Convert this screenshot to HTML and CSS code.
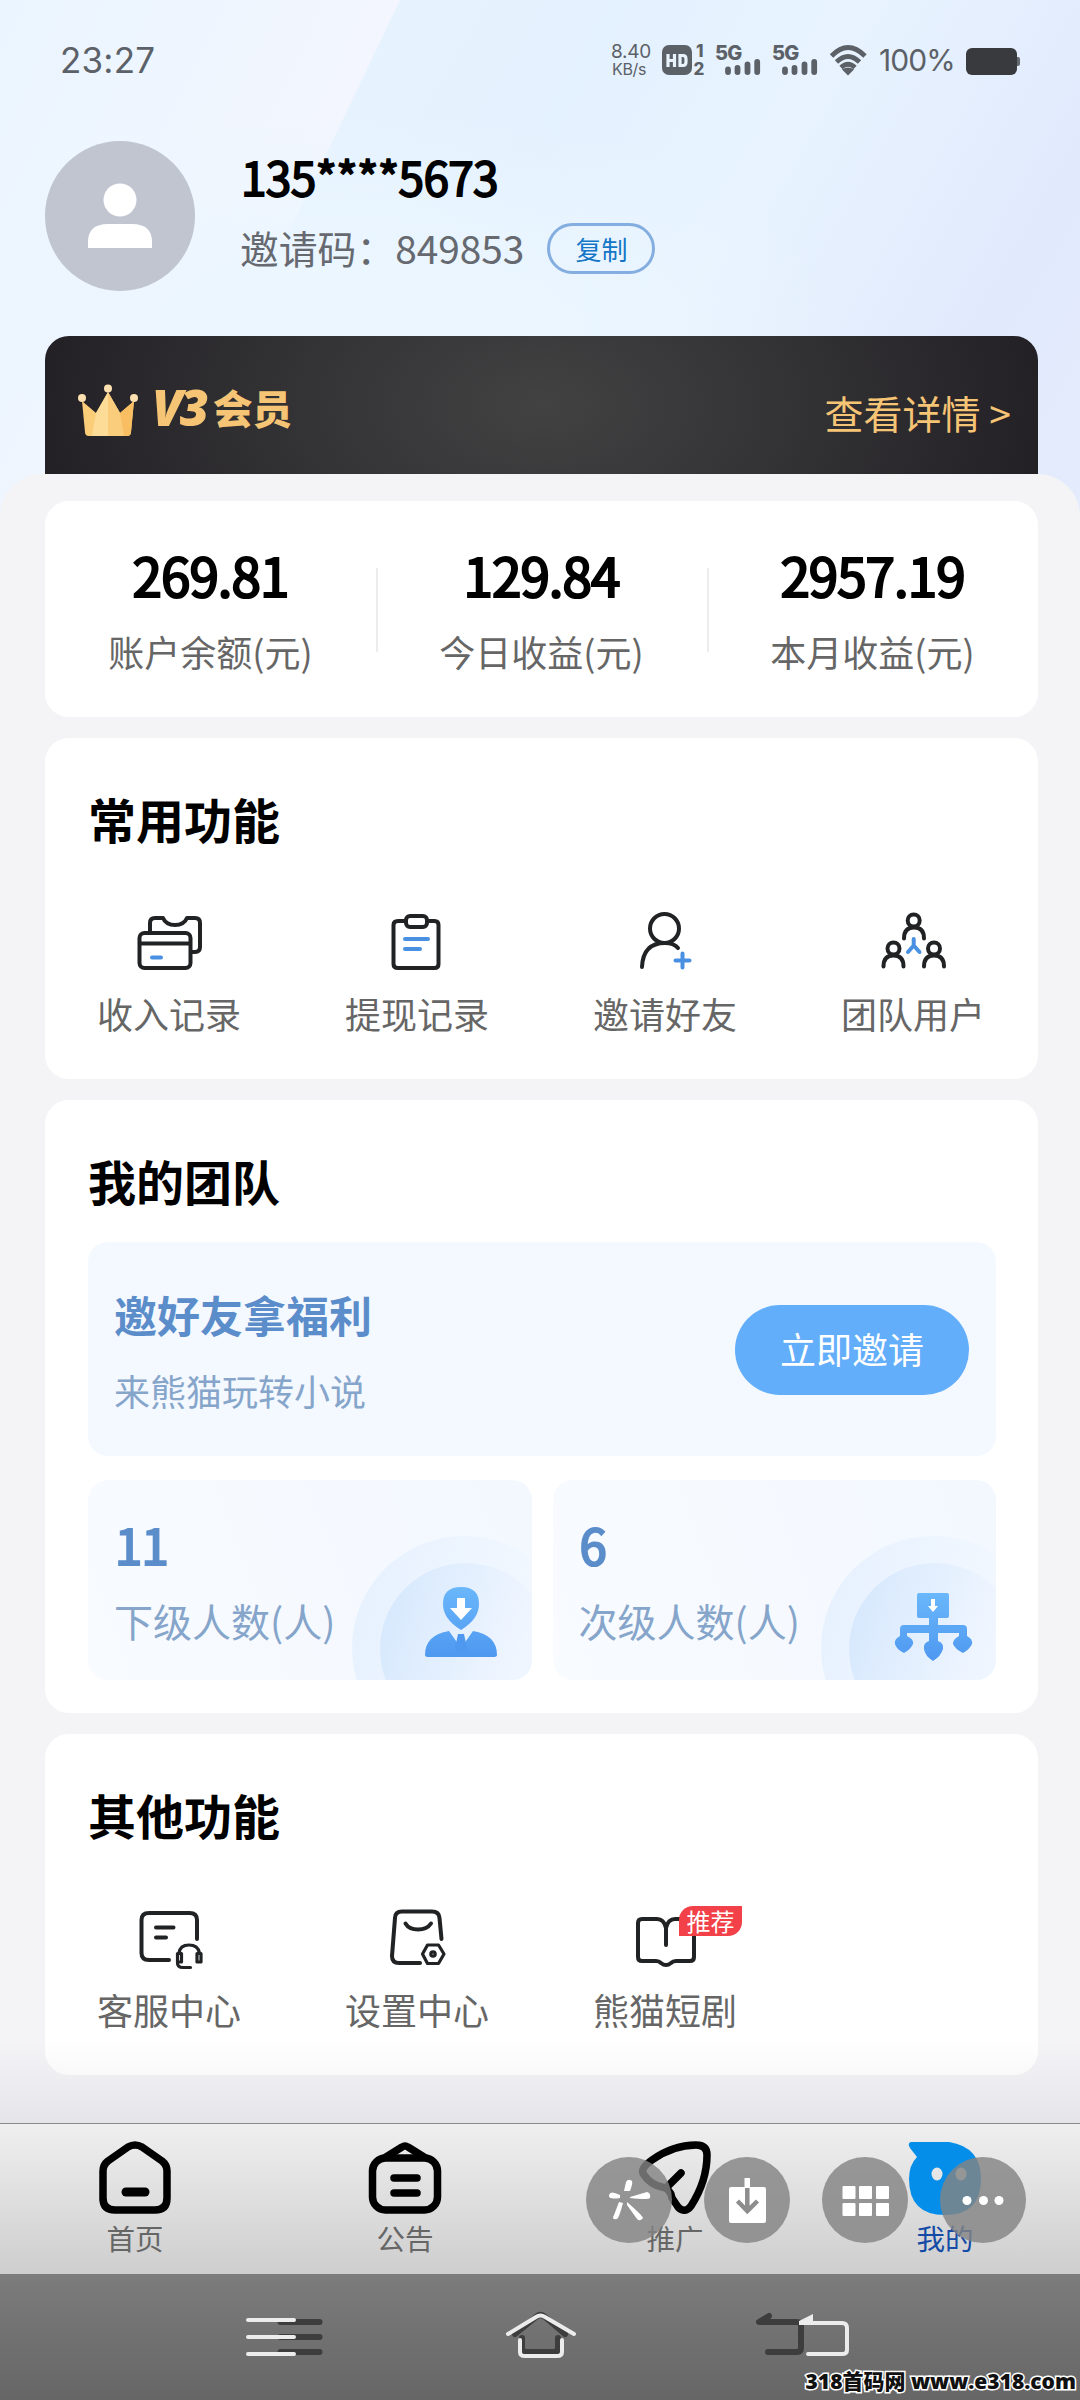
FILE: index.html
```html
<!DOCTYPE html>
<html lang="zh-CN">
<head>
<meta charset="utf-8">
<title>我的</title>
<link rel="stylesheet" href="styles.css">
</head>
<body>
<div class="screen">
  <header class="hero">
    <div class="statusbar">
      <span class="clock">23:27</span>
      <span class="speed"><span>8.40</span><span class="unit">KB/s</span></span>
      <svg class="signals" width="206" height="40" viewBox="0 -4 206 40">
        <g fill="#5c6168">
          <rect x="0" y="1" width="30" height="30" rx="7"/>
          <text x="34" y="13" class="st">1</text><text x="31.500" y="31" class="st">2</text>
          <text x="53" y="15.500" class="st g">5G</text><text x="110" y="15.500" class="st g">5G</text>
          <path fill="none" stroke="#5c6168" stroke-width="5.8" stroke-linecap="round" d="M66 25.500V28M75.500 24V28M85.500 20.500V28M95.200 18V28M123 25.500V28M132.500 24V28M142.500 20.500V28M152.200 18V28"/>
          <path d="M186 31.500l-6-6q6-4 12 0z"/>
        </g>
        <path fill="none" stroke="#5c6168" stroke-width="4.800" d="M169.500 12Q186-5 203 12M174.500 18Q186 7 197.500 18M179 23.500Q186 17 193 23.500"/>
        <path fill="none" stroke="#e8f3fe" stroke-width="3.200" d="M6 10V23M12.500 10V23M6 16.500H12.500M18 11.500H21Q24 11.500 24 15V18Q24 21.500 21 21.500H18Z"/>
      </svg>
      <span class="pct">100%</span>
      <span class="battery"></span>
    </div>
    <div class="profile">
      <svg class="avatar" viewBox="0 0 150 150"><circle cx="75" cy="75" r="75" fill="#c0c5d0"/><circle cx="75" cy="59" r="16.500" fill="#fff"/><path fill="#fff" d="M43 107V101Q43 83 63 83H87Q107 83 107 101V107Z"/></svg>
      <div class="ident">
        <div class="phone">135****5673</div>
        <div class="code"><span>邀请码：849853</span><button class="copy">复制</button></div>
      </div>
    </div>
    <div class="vip">
      <svg class="crown" width="60" height="54" viewBox="0 0 60 54"><path fill="#fbcd78" d="M7 48L4 17 18 29 30 8 42 29 56 17 53 48Q53 52 49 52H11Q7 52 7 48Z"/><path fill="#fddc98" d="M30 8L42 29 46 52H14L18 29Z"/><path fill="#f8c36a" d="M30 8L42 29 46 52H30Z" opacity=".6"/><path fill="#f9be62" d="M42 29L56 17 53 48Q53 52 49 52H46Z"/><g fill="#fde0b0"><circle cx="30" cy="4.500" r="4"/><circle cx="4" cy="14" r="4"/><circle cx="56" cy="14" r="4"/></g></svg>
      <span class="level"><i>V3</i>会员</span>
      <span class="detail">查看详情 &gt;</span>
    </div>
  </header>
  <main class="sheet">
    <section class="card stats">
      <div class="stat"><b>269.81</b><span>账户余额(元)</span></div>
      <div class="stat"><b>129.84</b><span>今日收益(元)</span></div>
      <div class="stat"><b>2957.19</b><span>本月收益(元)</span></div>
    </section>
    <section class="card tools">
      <h2>常用功能</h2>
      <div class="grid">
        <div class="tool"><svg viewBox="0 0 68 60"><path d="M15 21V12Q15 7 20 7H28Q31 14 40 14T52 7H60Q65 7 65 12V36Q65 41 60 41H57"/><rect x="4.500" y="22" width="51" height="35" rx="5"/><path d="M5 32.500H55"/><path class="blue" d="M17 46.500H26"/></svg><span>收入记录</span></div>
        <div class="tool"><svg viewBox="0 0 68 60"><path d="M21 10H15Q10.500 10 10.500 14V53Q10.500 57 15 57H51.500Q55.500 57 55.500 53V14Q55.500 10 51.500 10H45"/><rect x="23" y="5" width="21" height="11" rx="4"/><path class="blue" d="M22 28H45M22 38H37"/></svg><span>提现记录</span></div>
        <div class="tool"><svg viewBox="0 0 68 60"><circle cx="33.500" cy="17.500" r="14.500"/><path d="M11 56Q12 32 34 32Q43 32 47 37"/><path class="blue" d="M51.500 42.500V56.500M44.500 49.500H58.500"/></svg><span>邀请好友</span></div>
        <div class="tool"><svg viewBox="0 0 68 60"><circle cx="34.700" cy="9.500" r="6"/><path d="M25 27.500Q25 16.500 35 16.500T45 27.500"/><circle cx="14.500" cy="37.500" r="6"/><path d="M4.500 55.500Q4.500 44.500 14.500 44.500T24.500 55.500"/><circle cx="55" cy="37.500" r="6"/><path d="M45 55.500Q45 44.500 55 44.500T65 55.500"/><path class="blue" d="M34.700 28V34.500L29 41M34.700 34.500L40.500 41"/></svg><span>团队用户</span></div>
      </div>
    </section>
    <section class="card team">
      <h2>我的团队</h2>
      <div class="banner">
        <div class="pitch"><b>邀好友拿福利</b><span>来熊猫玩转小说</span></div>
        <button class="invite">立即邀请</button>
      </div>
      <div class="minis">
        <div class="mini">
          <svg class="deco" width="180" height="146" viewBox="0 0 180 146"><defs><linearGradient id="ring" x1="0" y1="0.200" x2="1" y2=".5"><stop offset="0" stop-color="#e6f1fe"/><stop offset=".8" stop-color="#f3f8ff"/></linearGradient><linearGradient id="disc" x1="0" y1="0.200" x2="1" y2=".5"><stop offset="0" stop-color="#d6e8fd"/><stop offset=".85" stop-color="#f0f6ff"/></linearGradient><linearGradient id="ink" x1="0" y1="0" x2="0" y2="1"><stop offset="0" stop-color="#6ab7fb"/><stop offset="1" stop-color="#4e98f0"/></linearGradient></defs><circle cx="112" cy="114" r="112" fill="url(#ring)"/><circle cx="114" cy="115" r="86" fill="url(#disc)"/><path fill="url(#ink)" d="M109 53Q127 53 127 70Q127 85 109 96Q91 85 91 70Q91 53 109 53ZM97 97L109 114 121 97Q145 101 145 121Q145 123 141 123H77Q73 123 73 121Q73 101 97 97Z"/><path fill="#fff" d="M105 64H113V74H120L109 86 98 74H105Z"/><path fill="#4e98f0" d="M106 100H112L115 114 109 120 103 114Z"/></svg>
          <b>11</b><span>下级人数(人)</span>
        </div>
        <div class="mini">
          <svg class="deco" width="176" height="146" viewBox="0 0 176 146"><circle cx="113" cy="114" r="112" fill="url(#ring)"/><circle cx="115" cy="115" r="86" fill="url(#disc)"/><g fill="url(#ink)"><path d="M99 59H127Q129 59 129 61V82Q129 84 127 84H118V91H143Q147 91 147 95V102Q153 105 152 110Q150 115 143 119Q135 115 133 110Q133 105 139 102V99H118V107Q124 109 123 115Q121 122 113 127Q105 122 104 115Q103 109 109 107V99H87V102Q94 105 93 110Q91 115 84 119Q76 115 75 110Q74 105 80 102V95Q80 91 84 91H109V84H99Q97 84 97 82V61Q97 59 99 59Z"/></g><path fill="#fff" d="M111 65H115V72H118L113 78 108 72H111Z"/></svg>
          <b>6</b><span>次级人数(人)</span>
        </div>
      </div>
    </section>
    <section class="card tools">
      <h2>其他功能</h2>
      <div class="grid">
        <div class="tool"><svg viewBox="0 0 68 60"><path d="M34 53H14Q6.500 53 6.500 46V13Q6.500 6 14 6H54.500Q62 6 62 13V32M21 20.500H38.500M21 30.500H31"/><path class="thin" d="M44 46Q45 38 54 38T64.500 46M42.500 46.500H46.500V55H42.500ZM62 46.500H66V55H62ZM42.500 55Q42 60.500 48 60.500H55.500"/></svg><span>客服中心</span></div>
        <div class="tool"><svg viewBox="0 0 68 60"><path d="M37 56H16Q9 56 9 49L12 11Q12 4.500 19 4.500H49Q56 4.500 56.500 11L58.500 32M22.500 16.500Q26 22.500 35 22.500T48 16.500"/><path class="thin" d="M44.500 38H55.500L61 47 55.500 56.500H44.500L39.500 47Z"/><circle class="thin" cx="50" cy="47" r="2.200"/></svg><span>设置中心</span></div>
        <div class="tool"><svg viewBox="0 0 68 60"><path d="M35 21Q33 12 26 12H11Q7 12 7 16V50Q7 54 11 54H25Q28 54 30 56Q35 60 40 56Q42 54 45 54H59Q63 54 63 50V16Q63 12 59 12H44Q37 12 35 21V38"/></svg><em class="hot">推荐</em><span>熊猫短剧</span></div>
      </div>
    </section>
  </main>
  <div class="fade"></div>
  <nav class="tabs">
    <div class="tab"><svg viewBox="0 0 74 74"><path d="M5 59V30Q5 24 10 20L30 6Q37 2 44 6L64 20Q69 24 69 30V57Q69 69 57 69H17Q5 69 5 57"/><path d="M28 51H47" stroke-width="9"/></svg><span>首页</span></div>
    <div class="tab"><svg viewBox="0 0 74 74"><rect x="4.500" y="17" width="65" height="52" rx="13"/><path d="M18 16L34 6Q37 4 40 6L56 16M26 37H49M26 52H49"/></svg><span>公告</span></div>
    <div class="tab"><svg viewBox="0 0 74 74"><path d="M14 19Q35 4 58 4Q69 4 69 14Q69 40 53 65Q47 73 40 66L34 57Q32 47 24 46Q13 44 6 34Q1 28 14 19ZM43 32L29 46"/></svg><span>推广</span></div>
    <div class="tab on"><svg viewBox="0 0 74 74"><path class="solid" d="M3 1H41Q73 6 73 38Q73 74 37 74Q1 74 1 38Q1 24 9 16L2 7Q-1 2 3 1Z"/><ellipse class="eye" cx="29" cy="33" rx="5.500" ry="6.500"/><ellipse class="eye" cx="53" cy="33" rx="5.500" ry="6.500"/></svg><span>我的</span></div>
    <div class="float f1"><svg viewBox="0 0 86 86"><path fill="#fff" d="M38 34L40 25Q42 21 46 24Q47 26 44 34ZM34 41Q22 43 23 38Q24 33 34 38ZM44 40L61 35Q65 36 64 41Q62 43 44 41ZM37 46Q33 61 31 62Q25 63 28 58L33 45ZM41 45Q56 58 57 61Q54 65 51 62L41 48Z"/></svg></div>
    <div class="float f2"><svg viewBox="0 0 86 86"><path fill="#fff" d="M40.500 21H46V30H60Q62 30 62 32V64Q62 66 60 66H27Q25 66 25 64V32Q25 30 27 30H40.500Z"/><path fill="none" stroke="#8d8d8d" stroke-width="4.500" d="M43.300 31V54M33.500 44L43.300 54 53.500 44"/></svg></div>
    <div class="float f3"><svg viewBox="0 0 86 86"><g fill="#fff"><rect x="20.500" y="29" width="13" height="13" rx="1"/><rect x="37" y="29" width="13" height="13" rx="1"/><rect x="54" y="29" width="13" height="13" rx="1"/><rect x="20.500" y="46" width="13" height="13" rx="1"/><rect x="37" y="46" width="13" height="13" rx="1"/><rect x="54" y="46" width="13" height="13" rx="1"/></g></svg></div>
    <div class="float f4"><svg viewBox="0 0 86 86"><g fill="#fff"><circle cx="27" cy="43.500" r="4.500"/><circle cx="43.500" cy="43.500" r="4.500"/><circle cx="59" cy="43.500" r="4.500"/></g></svg></div>
  </nav>
  <footer class="sysnav">
    <svg width="1080" height="126" viewBox="0 0 1080 126" fill="none" stroke-linecap="round" stroke-linejoin="round"><g stroke="#3d3d3d" stroke-width="6"><path d="M280.500 48H319.500M280.500 63H319.500M280.500 78H319.500M515 60L536 43Q540.500 39 545 43L565 60M522 64V74Q522 78 526 78H554Q558 78 558 74V64M769 42L759 48H797Q801 48 801 52V74Q801 78 797 78H768"/></g><g stroke="#ececec" stroke-width="4"><path d="M248 46H294M248 63H294M248 80H294M508 60L536 43Q540.500 40 545 43L574 60M520 66V78Q520 82 525 82H557Q562 82 562 78V66M802 49H842Q847 49 847 54V76Q847 80 842 80H808"/></g><path fill="#ececec" d="M799 47L813 40V51H799Z"/></svg>
    <span class="mark">318首码网 www.e318.com</span>
  </footer>
</div>
</body>
</html>
```
FILE: styles.css
```css
* { box-sizing: border-box; }
body { margin: 0; font-family: "Noto Sans CJK SC", sans-serif; color: #000; }
svg { display: block; }
button { padding: 0; font-family: inherit; }
.screen { width: 1080px; height: 2400px; display: flex; flex-direction: column; position: relative; overflow: hidden; background: #f4f4f7; }
.hero { height: 534px; margin-bottom: -60px; flex: none; padding: 0 42px 0 45px;
  background: radial-gradient(ellipse 480px 220px at 34% 62%, #ebf6ff 0, #ebf6ff 30%, rgba(235,246,255,0) 100%), linear-gradient(115.600deg, #eaf5ff 0, #f3f6fe 29.900%, rgba(243,246,254,0) 30%), linear-gradient(120deg, #e6f2fe 30%, #e4f1fe 45%, #e8f3ff 62%, #e1eafc 84%, #e3ebfc); }
.statusbar { height: 120px; display: flex; align-items: center; color: #5c6168; font-family: Inter, sans-serif; }
.clock { font-size: 35px; margin-left: 15px; width: 551px; font-weight: 400; letter-spacing: .2px; }
.speed { width: 51px; display: flex; flex-direction: column; font-size: 19px; line-height: 19px; font-family: Inter, sans-serif; letter-spacing: -.3px; }
.unit { font-size: 16px; line-height: 17px; margin-left: 1px; }
.signals { overflow: visible; }
.st { font: 800 17px Inter, sans-serif; }
.g { font-size: 20px; letter-spacing: -.8px; }
.pct { font-size: 30px; font-weight: 400; margin-left: 11px; width: 87px; letter-spacing: -.9px; }
.battery { width: 51px; height: 27px; border-radius: 6px; background: #393a3d; margin-top: 2px; position: relative; }
.battery::after { content: ""; position: absolute; left: 51px; top: 9px; width: 3px; height: 9px; background: #66696d; border-radius: 0 2px 2px 0; }
.profile { height: 216px; display: flex; padding-top: 18px; }
.avatar { width: 150px; height: 150px; margin-top: 3px; }
.ident { margin-left: 45px; }
.phone { font-size: 46px; line-height: 76px; -webkit-text-stroke: 1.800px #000; letter-spacing: -.7px; margin-left: 1px; }
.code { display: flex; align-items: center; font-size: 38.800px; line-height: 66px; color: #666a70; }
.copy { width: 108px; height: 51px; border: 3px solid #84aee0; border-radius: 26px; background: transparent; color: #1476c6; font-size: 26px; line-height: 40px; margin: 3px 0 0 23px; }
.vip { height: 138px; display: flex; align-items: center; border-radius: 24px 24px 0 0; padding: 0 27px 0 33px; color: #f6c475; background: radial-gradient(ellipse 500px 300px at 50% 50%, #434243 0, #333234 50%, #232126 100%); }
.crown { margin-top: 12px; }
.level { margin-left: 14px; margin-top: 3px; font-size: 39.500px; font-weight: 900; flex: 1; display: flex; align-items: center; line-height: 50px; }
.level i { width: 61px; font: italic 800 50px/50px "Open Sans", sans-serif; letter-spacing: -3px; }
.detail { font-size: 39px; margin-top: 14px; }
.sheet { position: relative; background: #f4f4f7; border-radius: 42px 42px 0 0; height: 1650px; flex: none; padding: 27px 42px 0 45px; display: flex; flex-direction: column; gap: 21px; }
.card { background: #fff; border-radius: 24px; flex: none; }
.stats { height: 216px; display: grid; grid-template-columns: repeat(3, 1fr); align-items: center; }
.stat { text-align: center; position: relative; }
.stat + .stat::before { content: ""; position: absolute; left: 0; top: 29px; height: 84px; width: 2px; background: #ececee; }
.stat b, .stat span { display: block; }
.stat b { font-size: 53px; line-height: 76px; font-weight: 400; -webkit-text-stroke: 2.200px #000; letter-spacing: -1px; margin-top: -3px; }
.stat span { font-size: 36px; line-height: 52px; margin-top: 13px; color: #666; padding-bottom: 2px; }
h2 { margin: 0; font-size: 48px; line-height: 70px; font-weight: 700; padding-left: 43px; position: relative; top: -2px; }
.tools { height: 341px; padding-top: 47px; }
.grid { display: grid; grid-template-columns: repeat(4, 248px); margin-top: 56px; }
.tool { position: relative; display: flex; flex-direction: column; align-items: center; font-size: 36px; line-height: 52px; color: #666; }
.tool svg { width: 68px; height: 60px; overflow: visible; fill: none; stroke: #202224; stroke-width: 4; stroke-linecap: round; stroke-linejoin: round; }
.tool span { margin-top: 16px; }
.tool .blue { stroke: #4a90e2; }
.tool .thin { stroke-width: 3.200; }
.hot { position: absolute; left: 138px; top: -1px; width: 63px; height: 30px; background: #f24148; border-radius: 14px 0 14px 0; color: #fff; font: 24px/30px "Noto Sans CJK SC", sans-serif; text-align: center; }
.team { height: 613px; padding-top: 47px; }
.banner { margin: 25px 42px 24px 43px; height: 214px; border-radius: 20px; background: #f4f8ff; display: flex; align-items: center; justify-content: space-between; padding: 2px 27px 0 26px; }
.pitch { margin-top: -2px; }
.pitch b { display: block; font-size: 43px; line-height: 62px; color: #5b8dca; font-weight: 700; }
.pitch span { display: block; font-size: 36px; line-height: 52px; margin-top: 19px; color: #86a5ca; }
.invite { width: 234px; height: 90px; border: 0; border-radius: 45px; background: #62aefb; color: #fff; font-size: 36px; line-height: 86px; padding-bottom: 4px; }
.minis { display: grid; grid-template-columns: 1fr 1fr; gap: 21px; margin: 0 42px 0 43px; }
.mini { height: 200px; border-radius: 20px; background: linear-gradient(70deg, #f8fbff, #f3f8ff); position: relative; overflow: hidden; padding: 28px 26px; }
.deco { position: absolute; right: 0; bottom: 0; }
.mini b { display: block; position: relative; font-size: 49px; line-height: 72px; font-weight: 400; -webkit-text-stroke: 2.200px #5b8dca; letter-spacing: -.8px; color: #5b8dca; padding-left: 1px; }
.mini span { display: block; position: relative; font-size: 39px; line-height: 56px; color: #86a5ca; margin-top: 12px; }
.fade { position: absolute; left: 0; top: 2040px; width: 1080px; height: 84px; background: linear-gradient(rgba(80,84,92,0), rgba(80,84,92,.09)); }
.tabs { position: relative; height: 151px; margin-top: -1px; flex: none; border-top: 1px solid #88898b; background: linear-gradient(#efefef, #cecece); display: grid; grid-template-columns: repeat(4, 270px); }
.tab { display: flex; flex-direction: column; align-items: center; font-size: 28.500px; line-height: 42px; color: #666; padding-top: 17px; }
.tab svg { width: 74px; height: 74px; overflow: visible; fill: none; stroke: #000; stroke-width: 7.500; stroke-linecap: round; stroke-linejoin: round; }
.tab span { margin-top: 2px; }
.tab .solid { fill: #058ee9; stroke: none; }
.tab .eye { fill: #e4e6e8; stroke: none; }
.on { color: #134ba6; }
.float { position: absolute; top: 33px; width: 86px; height: 86px; border-radius: 50%; background: rgba(132,132,132,.82); }
.f1 { left: 586px; } .f2 { left: 704px; } .f3 { left: 822px; } .f4 { left: 940px; }
.sysnav { position: relative; height: 126px; flex: none; background: linear-gradient(#7c7c7c, #666); }
.mark { position: absolute; right: 4px; bottom: 3px; font: 800 21px/32px "Open Sans", "Noto Sans CJK SC", sans-serif; color: #111; -webkit-text-stroke: 3px #fff; paint-order: stroke fill; white-space: nowrap; }
```
